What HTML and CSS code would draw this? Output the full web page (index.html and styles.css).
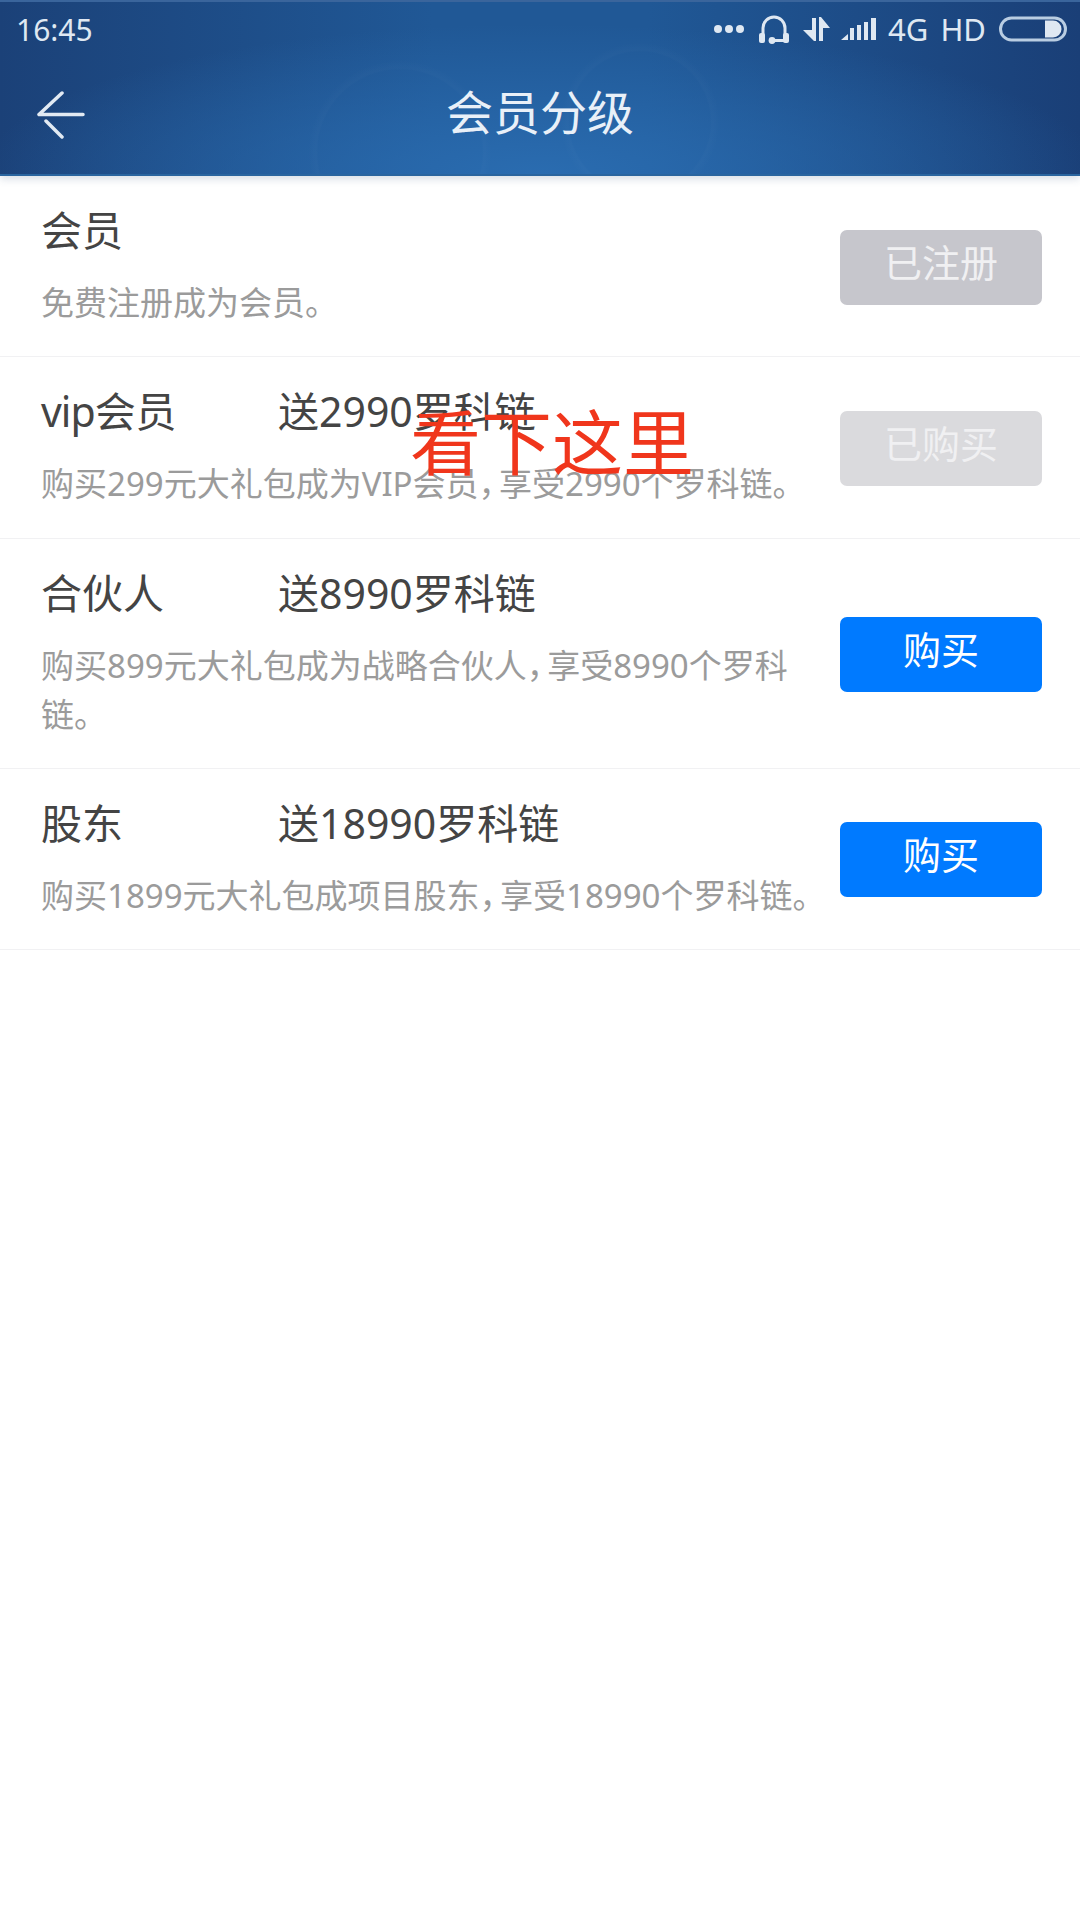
FILE: index.html
```html
<!DOCTYPE html>
<html lang="zh-CN">
<head>
	<meta charset="UTF-8">
	<title>会员分级</title>
	<link rel="stylesheet" href="styles.css">
</head>
<body>
	<header class="top">
		<div class="status">
			<span class="time">16:45</span>
			<div class="status-right">
				<svg class="ic-dots" width="30" height="10" viewBox="0 0 30 10"><circle cx="4" cy="5" r="4"/><circle cx="15" cy="5" r="4"/><circle cx="26" cy="5" r="4"/></svg>
				<svg class="ic-line" width="32" height="30" viewBox="0 0 32 30"><path d="M5 22V14a11 11 0 0 1 22 0v8"/><path d="M27 26.500H14"/><rect class="fill" x="1" y="19" width="6" height="10" rx="2"/><rect class="fill" x="25" y="19" width="6" height="10" rx="2"/><circle class="fill" cx="14" cy="26.500" r="3.400"/></svg>
				<svg class="ic-fill" width="28" height="26" viewBox="0 0 28 26"><path d="M10 2h4v23h-2L1 14h9zM17 25V1h2l9 11h-7v13z"/></svg>
				<svg class="ic-fill" width="36" height="22" viewBox="0 0 36 22"><path d="M0 22l7-6v6zM9 22V10h4v12zM16 22V7h4v15zM23 22V4h4v18zM30 22V0h5v22z"/></svg>
				<span class="net">4G</span>
				<span class="net">HD</span>
				<svg class="ic-line battery" width="68" height="26" viewBox="0 0 68 26"><rect x="1.500" y="2" width="65" height="22" rx="11"/><path class="fill" d="M46 4.500h8a8.500 8.500 0 0 1 0 17h-8z"/></svg>
			</div>
		</div>
		<div class="nav">
			<svg class="back" width="48" height="48" viewBox="0 0 48 48"><path d="M25 2L2 23.500H46M9 30l16 16"/></svg>
			<h1 class="nav-title">会员分级</h1>
		</div>
	</header>

	<ul class="member-list">
		<li class="member">
			<div class="info">
				<div class="name-line"><span class="name">会员</span></div>
				<p class="desc">免费注册成为会员。</p>
			</div>
			<button class="btn btn-done">已注册</button>
		</li>
		<li class="member">
			<div class="info">
				<div class="name-line"><span class="name"><span class="latin">vip</span>会员</span><span class="gift">送2990罗科链</span></div>
				<p class="desc">购买299元大礼包成为VIP会员<span class="comma">，</span>享受2990个罗科链。</p>
			</div>
			<button class="btn btn-off">已购买</button>
			<div class="note">看下这里</div>
		</li>
		<li class="member">
			<div class="info">
				<div class="name-line"><span class="name">合伙人</span><span class="gift">送8990罗科链</span></div>
				<p class="desc">购买899元大礼包成为战略合伙人<span class="comma">，</span>享受8990个罗科链。</p>
			</div>
			<button class="btn btn-buy">购买</button>
		</li>
		<li class="member">
			<div class="info">
				<div class="name-line"><span class="name">股东</span><span class="gift">送18990罗科链</span></div>
				<p class="desc">购买1899元大礼包成项目股东<span class="comma">，</span>享受18990个罗科链。</p>
			</div>
			<button class="btn btn-buy">购买</button>
		</li>
	</ul>
</body>
</html>
```

FILE: styles.css
```css
*{
	box-sizing: border-box;
}
body{
	margin: 0;
	min-height: 1920px;
	background-color: #fff;
	font-family: "Noto Sans", "Noto Sans CJK SC", sans-serif;
}

/* 顶部蓝色区域 */
.top{
	height: 176px;
	color: #dfe8f2;
	border-top: 2px solid #3a659c;
	border-bottom: 2px solid #2a659f;
	box-shadow: 0 3px 8px rgba(60, 90, 130, .2);
	background-color: #1c4a85;
	background-image:
		radial-gradient(circle at 400px 150px, rgba(255, 255, 255, 0) 82px, rgba(255, 255, 255, .015) 84px, rgba(255, 255, 255, 0) 92px),
		radial-gradient(circle at 640px 120px, rgba(255, 255, 255, 0) 70px, rgba(255, 255, 255, .015) 72px, rgba(255, 255, 255, 0) 80px),
		radial-gradient(ellipse 560px 150px at 50% 100%, #2a6cb0 0%, rgba(42, 108, 176, 0) 100%),
		linear-gradient(90deg, #1b4178 0%, #205896 40%, #205896 60%, #1a3f77 100%);
}
.status{
	display: flex;
	justify-content: space-between;
	align-items: center;
	height: 54px;
	padding: 0 13px 0 16px;
}
.time{
	font-size: 30px;
}
.status-right{
	display: flex;
	align-items: center;
}
.status-right svg{
	display: block;
}
.ic-dots{
	fill: #dfe8f2;
	margin-right: 14px;
}
.ic-line{
	fill: none;
	stroke: #dfe8f2;
	stroke-width: 3;
	margin-right: 12px;
}
.ic-line .fill{
	fill: #dfe8f2;
	stroke: none;
}
.ic-fill{
	fill: #dfe8f2;
	margin-right: 11px;
}
.net{
	font-size: 31px;
	margin-right: 12px;
}
.net + .net{
	margin-right: 13px;
}
.battery{
	margin-right: 0;
	stroke: #b9cde2;
}
.nav{
	display: grid;
	grid-template-columns: 1fr auto 1fr;
	align-items: center;
	height: 118px;
	padding: 0 37px 12px;
}
.back{
	margin-top: 11px;
	fill: none;
	stroke: #e2eaf3;
	stroke-width: 3.500;
	stroke-linecap: round;
	stroke-linejoin: round;
}
.nav-title{
	margin: 0;
	font-size: 47px;
	font-weight: 400;
	color: #e9f0f8;
}

/* 会员列表 */
.member-list{
	margin: 0;
	padding: 0;
	list-style: none;
}
.member{
	position: relative;
	display: flex;
	align-items: center;
	padding: 24px 38px 29.300px 41px;
	border-bottom: 1px solid #f1f1f3;
}
.info{
	flex: 1;
	min-width: 0;
}
.name-line{
	display: flex;
	font-size: 41px;
	line-height: 60px;
	color: #444;
}
.name{
	width: 237px;
}
.latin{
	letter-spacing: -1px;
}
.desc{
	margin: 18px 0 0;
	font-size: 33px;
	line-height: 49px;
	color: #9b9b9b;
}
.comma{
	font-feature-settings: "halt";
	padding-right: 4px;
}
.btn{
	flex: none;
	width: 202px;
	height: 75px;
	margin-top: 7px;
	padding: 0 0 14px;
	border: 0;
	border-radius: 7px;
	font-family: inherit;
	font-size: 38px;
	color: #fff;
}
.btn-done{
	background-color: #c6c6cc;
	color: #f0f0f2;
}
.btn-off{
	background-color: #dadadd;
	color: #f0f0f2;
}
.btn-buy{
	background-color: #007aff;
}
.note{
	position: absolute;
	left: 410px;
	top: 40px;
	font-size: 71px;
	line-height: 90px;
	color: #f0361c;
}
```
